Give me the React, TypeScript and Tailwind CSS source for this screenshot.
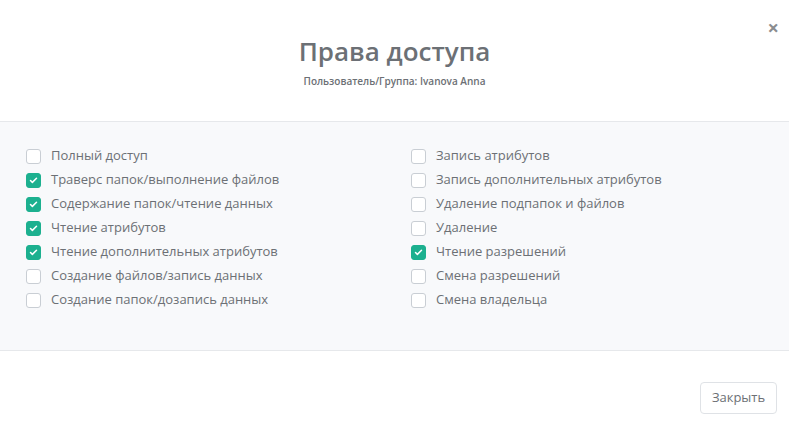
import { Check } from "lucide-react";

const left = [
  { label: "Полный доступ", on: false },
  { label: "Траверс папок/выполнение файлов", on: true },
  { label: "Содержание папок/чтение данных", on: true },
  { label: "Чтение атрибутов", on: true },
  { label: "Чтение дополнительных атрибутов", on: true },
  { label: "Создание файлов/запись данных", on: false },
  { label: "Создание папок/дозапись данных", on: false },
];

const right = [
  { label: "Запись атрибутов", on: false },
  { label: "Запись дополнительных атрибутов", on: false },
  { label: "Удаление подпапок и файлов", on: false },
  { label: "Удаление", on: false },
  { label: "Чтение разрешений", on: true },
  { label: "Смена разрешений", on: false },
  { label: "Смена владельца", on: false },
];

function Row({ label, on }: { label: string; on: boolean }) {
  return (
    <label className="flex items-center h-[24px] gap-[10px]">
      <span
        className={
          on
            ? "w-[15px] h-[15px] rounded-[3px] bg-[#1cb08f] border border-[#1cb08f] flex items-center justify-center"
            : "w-[15px] h-[15px] rounded-[3px] bg-white border border-[#c9ced4]"
        }
      >
        {on && <Check size={9} strokeWidth={4} color="#fff" />}
      </span>
      <span className="text-[13px] text-[#6c7075]">{label}</span>
    </label>
  );
}

export default function App() {
  return (
    <div className="w-[789px] h-[426px] bg-white flex flex-col font-['Open_Sans',sans-serif]">
      <div className="relative h-[121px] flex flex-col items-center pt-[33px]">
        <h2 className="text-[26px] leading-[36px] font-semibold text-[#6c7075]">
          Права доступа
        </h2>
        <span className="text-[10px] font-semibold text-[#6c7075] mt-[5px]">
          Пользователь/Группа: Ivanova Anna
        </span>
        <button className="absolute right-[10px] top-[18px] text-[20px] font-bold text-[#8a8d90] leading-none">
          ×
        </button>
      </div>
      <div className="h-[230px] bg-[#f8f9fb] border-y border-[#e6e8eb] flex pt-[22px] pl-[26px]">
        <div className="w-[385px] flex flex-col">
          {left.map((r) => (
            <Row key={r.label} {...r} />
          ))}
        </div>
        <div className="flex flex-col">
          {right.map((r) => (
            <Row key={r.label} {...r} />
          ))}
        </div>
      </div>
      <div className="flex justify-end pt-[31px] pr-[12px]">
        <button className="w-[77px] h-[32px] bg-white border border-[#dfe2e6] rounded-[4px] text-[13px] text-[#6c7075]">
          Закрыть
        </button>
      </div>
    </div>
  );
}
